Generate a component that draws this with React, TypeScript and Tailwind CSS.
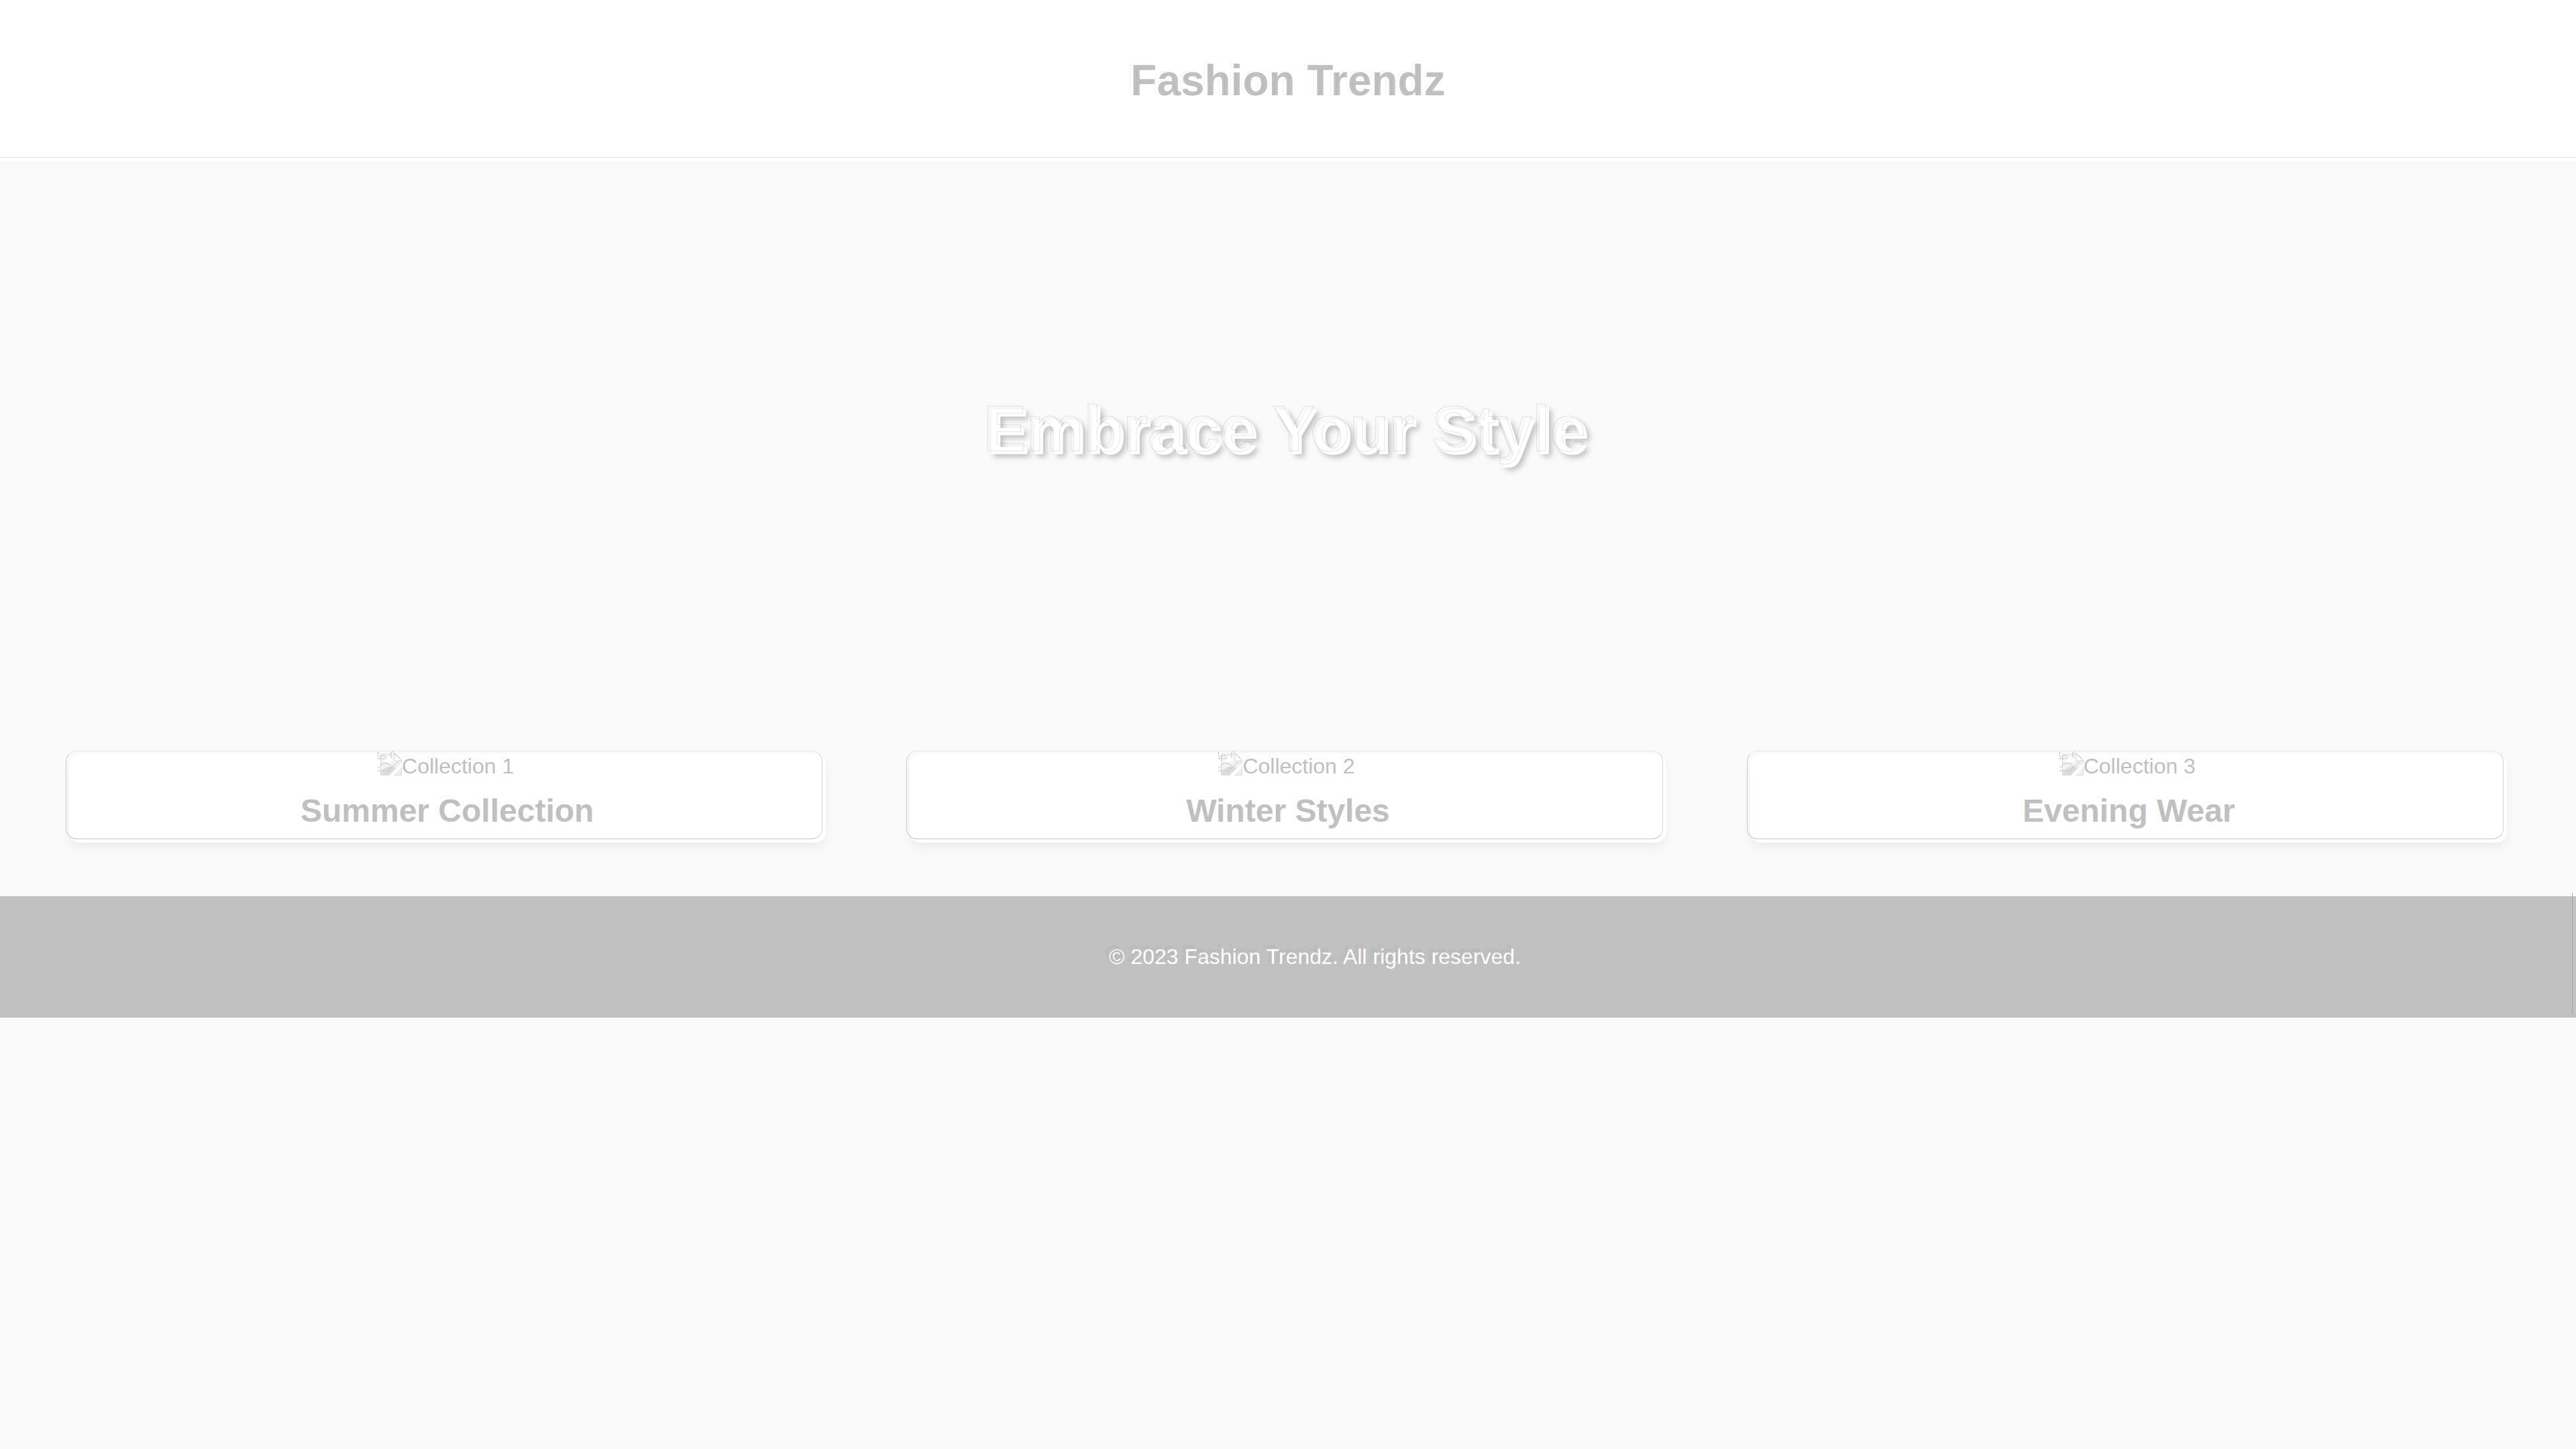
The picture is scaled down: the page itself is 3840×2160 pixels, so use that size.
const collections = [
  { alt: "Collection 1", title: "Summer Collection" },
  { alt: "Collection 2", title: "Winter Styles" },
  { alt: "Collection 3", title: "Evening Wear" },
];

const echo =
  "relative after:pointer-events-none after:absolute after:inset-0 after:-translate-x-[5px] after:-translate-y-[5px] after:text-transparent after:content-[attr(data-echo)]";

function PictureIcon() {
  return (
    <svg viewBox="0 0 32 32" className="size-8 shrink-0 overflow-visible" aria-hidden="true">
      <defs>
        <linearGradient id="sky" x1="0" y1="0" x2="0" y2="1">
          <stop offset="0" stopColor="#f6f6f6" />
          <stop offset="1" stopColor="#eeeeee" />
        </linearGradient>
      </defs>
      <path d="M.5 .5H21L31.500 10V31.500H.5Z" fill="url(#sky)" stroke="#dadada" />
      <path d="M6 12a4 4 0 0 1 1-7 5 5 0 0 1 8 1 3 3 0 0 1 1 6Z" fill="#fff" />
      <path d="M1 29C4 20 15 15 24 21L14 31H1Z" fill="#dcdcdc" />
      <path d="M21 0V10H32Z" fill="#fff" stroke="#dadada" />
      <path d="M13 32L32 13V19L20 32Z" fill="#fff" />
      <path d="M-3.500-3V5M-4 7H9M-2 7C0 1 7 1 9 6M-3 21C1 12 11 12 16 18M9 27L27 11M18-4L29 6M16-3V6M-4 25H6" fill="none" stroke="#b4b4b4" strokeDasharray="3 1" />
    </svg>
  );
}

export default function App() {
  return (
    <div className="min-h-screen overflow-x-hidden bg-[#fafafa] font-['Liberation_Sans',Arial,sans-serif] text-[32px] leading-[37px] text-[#c1c1c1]">
      <header className="relative border-b-4 border-[#f9f9f9] bg-white py-20 text-center after:absolute after:inset-x-0 after:bottom-[5px] after:h-px after:bg-[#e0e0e0]">
        <h1 className="text-[64px] leading-[80px] font-bold">
          <span data-echo="Fashion Trendz" className={`${echo} after:[-webkit-text-stroke:1px_#0000000e]`}>
            Fashion Trendz
          </span>
        </h1>
      </header>

      <main>
        <section className="flex h-[800px] items-center justify-center">
          <h2 className="text-[96px] leading-[110px] font-bold text-white [text-shadow:4px_4px_8px_#00000040]">
            <span data-echo="Embrace Your Style" className={`${echo} block after:[-webkit-text-stroke:1px_#0000001c] after:[text-shadow:none]`}>
              Embrace Your Style
            </span>
          </h2>
        </section>

        <section className="flex justify-around px-10 py-20">
          {collections.map((c) => (
            <article
              key={c.title}
              className="relative w-[30%] rounded-2xl bg-white text-center shadow-[0_8px_16px_#0000000e] after:pointer-events-none after:absolute after:inset-0 after:-translate-x-[5px] after:-translate-y-[5px] after:rounded-2xl after:border after:border-t-[#e4e4e4] after:border-r-[#d4d4d4] after:border-b-[#c4c4c4] after:border-l-[#cccccc]"
            >
              <div className="flex items-start justify-center">
                <PictureIcon />
                <span data-echo={c.alt} className={`${echo} after:[-webkit-text-stroke:1px_#0000000e]`}>
                  {c.alt}
                </span>
              </div>
              <h3 className="pt-5 pb-5 text-[48px] leading-[55px] font-bold">
                <span data-echo={c.title} className={`${echo} after:[-webkit-text-stroke:1px_#0000000e]`}>
                  {c.title}
                </span>
              </h3>
            </article>
          ))}
        </section>
      </main>

      <footer className="relative bg-[#c1c1c1] py-[72px] pl-20 text-center text-white after:absolute after:inset-y-0 after:right-[5px] after:w-px after:-translate-y-[5px] after:bg-[#a3a3a3]">
        <p>
          <span data-echo="© 2023 Fashion Trendz. All rights reserved." className={`${echo} after:[-webkit-text-stroke:1px_#00000014]`}>
            © 2023 Fashion Trendz. All rights reserved.
          </span>
        </p>
      </footer>
    </div>
  );
}
